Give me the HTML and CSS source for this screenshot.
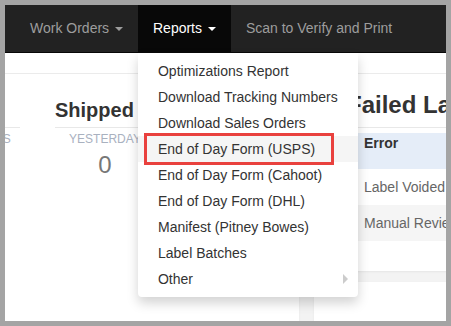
FILE: index.html
```html
<!DOCTYPE html>
<html lang="en">
<head>
  <meta charset="UTF-8" />
  <meta name="viewport" content="width=device-width, initial-scale=1.0" />
  <title>Reports</title>
  <link rel="stylesheet" href="styles.css">
</head>
<body>
  <div class="screen">
    <nav class="navbar">
      <ul class="nav">
        <li class="nav-item"><a href="#">Work Orders <span class="caret"></span></a></li>
        <li class="nav-item open">
          <a href="#">Reports <span class="caret"></span></a>
          <ul class="dropdown-menu">
            <li><a href="#">Optimizations Report</a></li>
            <li><a href="#">Download Tracking Numbers</a></li>
            <li><a href="#">Download Sales Orders</a></li>
            <li class="highlight"><a href="#">End of Day Form (USPS)</a></li>
            <li><a href="#">End of Day Form (Cahoot)</a></li>
            <li><a href="#">End of Day Form (DHL)</a></li>
            <li><a href="#">Manifest (Pitney Bowes)</a></li>
            <li><a href="#">Label Batches</a></li>
            <li><a href="#">Other <span class="submenu-arrow"></span></a></li>
          </ul>
        </li>
        <li class="nav-item"><a href="#">Scan to Verify and Print</a></li>
      </ul>
    </nav>

    <div class="subheader"></div>

    <main class="content">
      <section class="panel stats-panel">
        <div class="stat-group first">
          <h3>Ordered</h3>
          <div class="stat-row">
            <div class="stat">
              <div class="stat-label">Last 30 Days</div>
              <div class="stat-value">0</div>
            </div>
          </div>
        </div>
        <div class="stat-group">
          <h3>Shipped</h3>
          <div class="stat-row">
            <div class="stat">
              <div class="stat-label">Yesterday</div>
              <div class="stat-value">0</div>
            </div>
          </div>
        </div>
      </section>

      <div class="right-col">
        <section class="panel failed-panel">
          <h2>Failed Labels</h2>
          <table class="failed-table">
            <thead>
              <tr><th>Error</th></tr>
            </thead>
            <tbody>
              <tr><td>Label Voided</td></tr>
              <tr class="striped"><td>Manual Review</td></tr>
            </tbody>
          </table>
        </section>
        <section class="panel next-panel"></section>
      </div>
    </main>
  </div>
</body>
</html>
```

FILE: styles.css
```css
body {
  margin: 0;
  padding: 5px;
  background: #a4a4a4;
  font-family: 'Liberation Sans', Arial, sans-serif;
  font-size: 14px;
  color: #333;
}

.screen {
  width: 441px;
  height: 316px;
  overflow: hidden;
  background: #f3f3f3;
}

/* navbar */
.navbar {
  background: #222;
  height: 47px;
  border-bottom: 1px solid #080808;
}

.nav {
  display: flex;
  list-style: none;
  margin: 0;
  padding: 0 0 0 10px;
}

.nav-item {
  position: relative;
}

.nav-item > a {
  display: block;
  padding: 13px 15px 14px;
  line-height: 20px;
  color: #9d9d9d;
  text-decoration: none;
  white-space: nowrap;
}

.nav-item.open > a {
  background: #080808;
  color: #fff;
  padding-bottom: 15px;
}

.caret {
  display: inline-block;
  width: 0;
  height: 0;
  margin-left: 2px;
  vertical-align: middle;
  border-top: 4px solid;
  border-left: 4px solid transparent;
  border-right: 4px solid transparent;
}

/* dropdown */
.dropdown-menu {
  position: absolute;
  top: 48px;
  left: 0;
  z-index: 10;
  width: 220px;
  margin: 0;
  padding: 5px 0;
  list-style: none;
  background: #fff;
  border-radius: 0 0 4px 4px;
  box-shadow: 0 6px 12px rgba(0,0,0,0.175);
}

.dropdown-menu li {
  position: relative;
}

.dropdown-menu a {
  display: flex;
  justify-content: space-between;
  align-items: center;
  padding: 3px 20px;
  line-height: 20px;
  color: #333;
  text-decoration: none;
  white-space: nowrap;
}

.dropdown-menu .highlight a {
  background: #f5f5f5;
}

.dropdown-menu .highlight::after {
  content: "";
  position: absolute;
  left: 6px;
  top: -3px;
  width: 190px;
  height: 32px;
  box-sizing: border-box;
  border: 3px solid #e9413e;
}

.submenu-arrow {
  width: 0;
  height: 0;
  margin-right: -10px;
  border-style: solid;
  border-width: 5px 0 5px 5px;
  border-color: transparent transparent transparent #ccc;
}

/* page */
.subheader {
  height: 20px;
  background: #fff;
  border-bottom: 1px solid #ececec;
}

.content {
  display: flex;
  gap: 15px;
  height: 300px;
}

.panel {
  background: #fff;
  box-shadow: 0 1px 2px rgba(0,0,0,0.06);
}

.stats-panel {
  flex: none;
  width: 294px;
  display: flex;
  align-items: flex-start;
  gap: 35px;
  padding-top: 25px;
  overflow: hidden;
}

.stat-group {
  flex: none;
  width: 240px;
}

.stat-group.first {
  width: 100px;
  margin-left: -85px;
}

.stat-group h3 {
  margin: 0;
  padding-bottom: 6px;
  font-size: 20px;
  line-height: 22px;
  border-bottom: 1px solid #e8e8e8;
  white-space: nowrap;
}

.stat-row {
  display: flex;
}

.stat {
  width: 100px;
  text-align: center;
}

.stat-label {
  margin-top: 3px;
  font-size: 12px;
  line-height: 16px;
  color: #a9b1bf;
  text-transform: uppercase;
  white-space: nowrap;
}

.stat-value {
  margin-top: 4px;
  font-size: 24px;
  line-height: 28px;
  color: #777;
}

.right-col {
  flex: none;
  width: 320px;
  display: flex;
  flex-direction: column;
  gap: 11px;
}

.failed-panel {
  height: 212px;
  box-sizing: border-box;
  padding: 18px 0 0 33px;
}

.failed-panel h2 {
  margin: 0;
  padding-bottom: 9px;
  font-size: 24px;
  line-height: 26px;
  border-bottom: 1px solid #e8e8e8;
  white-space: nowrap;
}

.failed-table {
  margin: 5px 0 0 9px;
  border-collapse: collapse;
  width: 270px;
}

.failed-table th,
.failed-table td {
  height: 36px;
  padding: 0 8px;
  text-align: left;
  white-space: nowrap;
}

.failed-table th {
  background: #e5edf8;
  vertical-align: top;
  line-height: 20px;
  color: #333;
}

.failed-table td {
  color: #666;
}

.failed-table .striped td {
  background: #f5f5f5;
}

.next-panel {
  height: 100px;
}
```
